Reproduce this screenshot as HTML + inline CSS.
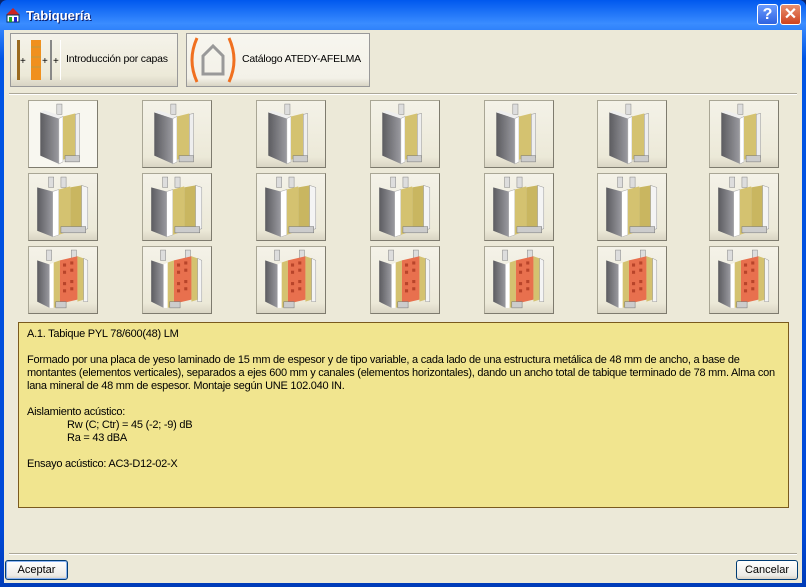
<!DOCTYPE html>
<html><head><meta charset="utf-8"><style>
*{margin:0;padding:0;box-sizing:border-box}
body{width:806px;height:587px;overflow:hidden;background:#0a246a;font-family:"Liberation Sans",sans-serif;font-size:11px;color:#000;position:relative}
.win{position:absolute;left:0;top:0;width:806px;height:587px;background:linear-gradient(#0058ee,#3a8cff 4%,#0055e5 10%,#0049d8 90%,#003cb8);border-radius:7px 7px 0 0}
.title{position:absolute;left:26px;top:8px;color:#fff;font-weight:bold;font-size:13px;text-shadow:1px 1px #0a1e6e}
.client{position:absolute;left:4px;top:30px;width:798px;height:553px;background:#ece9d8}
.tb{position:absolute;top:4px;border-radius:3px;width:21px;height:21px;border:1px solid #fff}
.abs{position:absolute}
.tool{position:absolute;top:3px;height:54px;border:1px solid #999;background:linear-gradient(#f5f3ea,#ece9d8 80%,#d8d4c4);white-space:nowrap}
.tool span{font-size:10.5px;letter-spacing:-0.2px}
.sep{position:absolute;left:5px;width:788px;height:2px;border-top:1px solid #aca899;border-bottom:1px solid #fff}
.gb{position:absolute;width:70px;height:68px;border:1px solid #a9a695;border-right-color:#7e7b6e;border-bottom-color:#7e7b6e;background:linear-gradient(#f4f2e8,#ece9d8 85%,#d9d5c4)}
.gb svg{position:absolute;left:4px;top:1px}
.info{position:absolute;left:14px;top:292px;width:771px;height:186px;background:#f1e58f;border:1px solid #7a5a1e;padding:5px 8px;line-height:13px;font-size:11px;letter-spacing:-0.25px}
.btn{position:absolute;top:530px;height:20px;border:1px solid #003c74;border-radius:3px;background:linear-gradient(#fff,#ecebe6 80%,#d6d0c5);text-align:center;line-height:18px;font-size:11px}
</style></head><body>
<svg width="0" height="0" style="position:absolute">
<defs>
<linearGradient id="g" x1="0" x2="1"><stop offset="0" stop-color="#5c5c60"/><stop offset="1" stop-color="#9a9aa0"/></linearGradient>
<symbol id="s1" viewBox="0 0 52 62">
<rect x="20" y="2" width="5" height="10" fill="#ddd" stroke="#888" stroke-width=".5"/>
<polygon points="4,10 22,16 22,60 4,52" fill="url(#g)"/>
<polygon points="4,10 8,8 26,14 22,16" fill="#eee"/>
<polygon points="22,16 26,14 26,58 22,60" fill="#fff" stroke="#aaa" stroke-width=".5"/>
<polygon points="26,14 38,11 38,52 26,56" fill="#d4c270"/>
<polygon points="38,12 42,11 42,54 38,56" fill="#eee" stroke="#999" stroke-width=".5"/>
<rect x="28" y="52" width="14" height="6" fill="#ccc" stroke="#777" stroke-width=".5"/>
</symbol>
<symbol id="s2" viewBox="0 0 52 62">
<rect x="12" y="2" width="5" height="10" fill="#ddd" stroke="#888" stroke-width=".5"/>
<rect x="24" y="2" width="5" height="10" fill="#ddd" stroke="#888" stroke-width=".5"/>
<polygon points="1,12 16,16 16,60 1,54" fill="url(#g)"/>
<polygon points="16,16 22,14 22,58 16,60" fill="#fff" stroke="#aaa" stroke-width=".5"/>
<polygon points="22,14 33,11 33,54 22,58" fill="#d4c270"/>
<polygon points="33,12 44,10 44,50 33,54" fill="#c9b660"/>
<polygon points="44,10 50,12 50,52 44,54" fill="#f4f4f4" stroke="#999" stroke-width=".5"/>
<rect x="24" y="50" width="24" height="6" fill="#ccc" stroke="#777" stroke-width=".5"/>
</symbol>
<symbol id="s3" viewBox="0 0 52 62">
<rect x="10" y="2" width="5" height="10" fill="#ddd" stroke="#888" stroke-width=".5"/>
<rect x="34" y="2" width="5" height="10" fill="#ddd" stroke="#888" stroke-width=".5"/>
<polygon points="1,12 13,16 13,58 1,52" fill="url(#g)"/>
<polygon points="13,16 17,14 17,58 13,58" fill="#fff"/>
<polygon points="17,14 23,12 23,56 17,58" fill="#d4c270"/>
<polygon points="23,12 40,8 40,50 23,54" fill="#e8704e"/>
<g fill="#b8442a"><rect x="26" y="15" width="3" height="3"/><rect x="33" y="13" width="3" height="3"/><rect x="26" y="22" width="3" height="3"/><rect x="33" y="20" width="3" height="3"/><rect x="26" y="33" width="3" height="3"/><rect x="33" y="31" width="3" height="3"/><rect x="26" y="40" width="3" height="3"/><rect x="33" y="38" width="3" height="3"/></g>
<polygon points="40,8 46,10 46,50 40,52" fill="#d4c270"/>
<polygon points="46,10 50,12 50,52 46,52" fill="#f4f4f4" stroke="#999" stroke-width=".5"/>
<rect x="19" y="52" width="10" height="6" fill="#ccc" stroke="#777" stroke-width=".5"/>
</symbol>
</defs></svg>
<div class="win">
<svg class="abs" style="left:5px;top:7px" width="17" height="16"><polygon points="8,1 1,8 15,8" fill="#c22"/><rect x="2" y="8" width="12" height="7" fill="#fff" stroke="#036" stroke-width="1"/><rect x="4" y="10" width="3" height="5" fill="#2a2"/><rect x="9" y="10" width="3" height="5" fill="#22c"/></svg>
<div class="title">Tabiquería</div>
<div class="tb" style="left:757px;background:linear-gradient(#6a9bff,#2e63e0);color:#fff;font-weight:bold;font-size:16px;text-align:center;line-height:19px">?</div>
<div class="tb" style="left:780px;background:linear-gradient(#e89070,#cf4320);color:#fff;font-weight:bold;font-size:16px;text-align:center;line-height:19px">✕</div>
<div class="client">
<div class="tool" style="left:6px;width:168px">
<svg class="abs" style="left:3px;top:3px" width="50" height="46"><rect x="3" y="3" width="3" height="40" fill="#9a6a20"/><rect x="17" y="3" width="10" height="40" fill="#f0901e"/><g stroke="#8a6" stroke-width=".5"><line x1="17" y1="10" x2="27" y2="10"/><line x1="17" y1="20" x2="27" y2="20"/><line x1="17" y1="30" x2="27" y2="30"/></g><rect x="36" y="3" width="2" height="40" fill="#888"/><rect x="46" y="3" width="1" height="40" fill="#fff"/><text x="6" y="27" font-size="10" font-family="Liberation Sans">+</text><text x="28" y="27" font-size="10" font-family="Liberation Sans">+</text><text x="39" y="27" font-size="10" font-family="Liberation Sans">+</text></svg>
<span class="abs" style="left:55px;top:19px">Introducción por capas</span></div>
<div class="tool" style="left:182px;width:184px;background:linear-gradient(#f7f6ef,#f3f1e8 85%,#d8d4c4)">
<svg class="abs" style="left:2px;top:2px" width="50" height="48"><path d="M8 2 Q-2 24 8 46" fill="none" stroke="#f07020" stroke-width="3"/><path d="M40 2 Q50 24 40 46" fill="none" stroke="#f07020" stroke-width="3"/><polygon points="24,10 14,20 14,38 34,38 34,20" fill="none" stroke="#999" stroke-width="3"/></svg>
<span class="abs" style="left:55px;top:19px">Catálogo ATEDY-AFELMA</span></div>
<div class="sep" style="top:63px"></div>

<div class="gb" style="left:24px;top:70px;background:#f8f7f0"><svg width="60" height="64"><use href="#s1"/></svg></div>
<div class="gb" style="left:138px;top:70px"><svg width="60" height="64"><use href="#s1"/></svg></div>
<div class="gb" style="left:252px;top:70px"><svg width="60" height="64"><use href="#s1"/></svg></div>
<div class="gb" style="left:366px;top:70px"><svg width="60" height="64"><use href="#s1"/></svg></div>
<div class="gb" style="left:480px;top:70px"><svg width="60" height="64"><use href="#s1"/></svg></div>
<div class="gb" style="left:593px;top:70px"><svg width="60" height="64"><use href="#s1"/></svg></div>
<div class="gb" style="left:705px;top:70px"><svg width="60" height="64"><use href="#s1"/></svg></div>

<div class="gb" style="left:24px;top:143px"><svg width="60" height="64"><use href="#s2"/></svg></div>
<div class="gb" style="left:138px;top:143px"><svg width="60" height="64"><use href="#s2"/></svg></div>
<div class="gb" style="left:252px;top:143px"><svg width="60" height="64"><use href="#s2"/></svg></div>
<div class="gb" style="left:366px;top:143px"><svg width="60" height="64"><use href="#s2"/></svg></div>
<div class="gb" style="left:480px;top:143px"><svg width="60" height="64"><use href="#s2"/></svg></div>
<div class="gb" style="left:593px;top:143px"><svg width="60" height="64"><use href="#s2"/></svg></div>
<div class="gb" style="left:705px;top:143px"><svg width="60" height="64"><use href="#s2"/></svg></div>

<div class="gb" style="left:24px;top:216px"><svg width="60" height="64"><use href="#s3"/></svg></div>
<div class="gb" style="left:138px;top:216px"><svg width="60" height="64"><use href="#s3"/></svg></div>
<div class="gb" style="left:252px;top:216px"><svg width="60" height="64"><use href="#s3"/></svg></div>
<div class="gb" style="left:366px;top:216px"><svg width="60" height="64"><use href="#s3"/></svg></div>
<div class="gb" style="left:480px;top:216px"><svg width="60" height="64"><use href="#s3"/></svg></div>
<div class="gb" style="left:593px;top:216px"><svg width="60" height="64"><use href="#s3"/></svg></div>
<div class="gb" style="left:705px;top:216px"><svg width="60" height="64"><use href="#s3"/></svg></div>

<div class="info">A.1. Tabique PYL 78/600(48) LM<br><br>Formado por una placa de yeso laminado de 15 mm de espesor y de tipo variable, a cada lado de una estructura metálica de 48 mm de ancho, a base de<br>montantes (elementos verticales), separados a ejes 600 mm y canales (elementos horizontales), dando un ancho total de tabique terminado de 78 mm. Alma con<br>lana mineral de 48 mm de espesor. Montaje según UNE 102.040 IN.<br><br>Aislamiento acústico:<br><span style="padding-left:40px">Rw (C; Ctr) = 45 (-2; -9) dB</span><br><span style="padding-left:40px">Ra = 43 dBA</span><br><br>Ensayo acústico: AC3-D12-02-X</div>

<div class="sep" style="top:523px"></div>
<div class="btn" style="left:1px;width:63px;box-shadow:inset 0 0 0 1px #8cb4f2">Aceptar</div>
<div class="btn" style="left:732px;width:62px">Cancelar</div>
</div></div>
</body></html>
